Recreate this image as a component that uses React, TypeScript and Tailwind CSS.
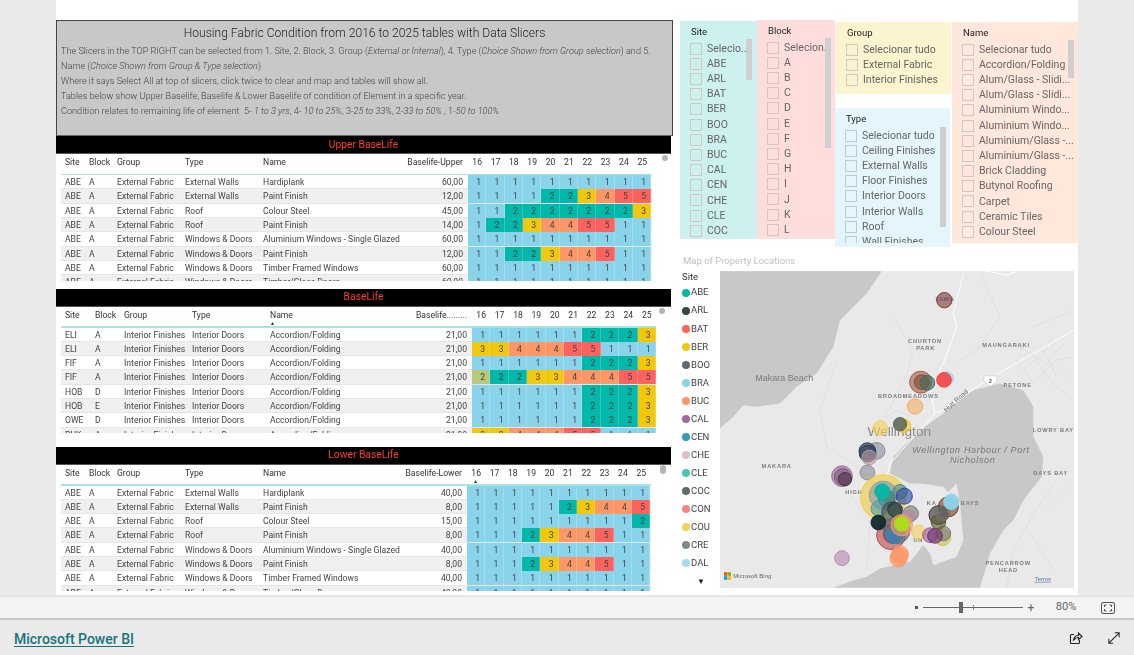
import React from "react";

const heat: Record<string, string> = {
  "1": "bg-[#8ad4eb]",
  "2": "bg-[#01b8aa]",
  "3": "bg-[#f2c80f]",
  "4": "bg-[#fe9666]",
  "5": "bg-[#fd625e]",
  p: "bg-[#b9c97a]",
};

type Row = [string, string, string, string, string, string, string];

const upper: Row[] = [
  ["ABE", "A", "External Fabric", "External Walls", "Hardiplank", "60,00", "1111111111"],
  ["ABE", "A", "External Fabric", "External Walls", "Paint Finish", "12,00", "1111223455"],
  ["ABE", "A", "External Fabric", "Roof", "Colour Steel", "45,00", "1122222223"],
  ["ABE", "A", "External Fabric", "Roof", "Paint Finish", "14,00", "1223445511"],
  ["ABE", "A", "External Fabric", "Windows & Doors", "Aluminium Windows - Single Glazed", "60,00", "1111111111"],
  ["ABE", "A", "External Fabric", "Windows & Doors", "Paint Finish", "12,00", "1122344511"],
  ["ABE", "A", "External Fabric", "Windows & Doors", "Timber Framed Windows", "60,00", "1111111111"],
  ["ABE", "A", "External Fabric", "Windows & Doors", "Timber/Glass Doors", "60,00", "1111111111"],
];
const base: Row[] = [
  ["ELI", "A", "Interior Finishes", "Interior Doors", "Accordion/Folding", "21,00", "1111112223"],
  ["ELI", "A", "Interior Finishes", "Interior Doors", "Accordion/Folding", "21,00", "3344455111"],
  ["FIF", "A", "Interior Finishes", "Interior Doors", "Accordion/Folding", "21,00", "1111112223"],
  ["FIF", "A", "Interior Finishes", "Interior Doors", "Accordion/Folding", "21,00", "p223344455"],
  ["HOB", "D", "Interior Finishes", "Interior Doors", "Accordion/Folding", "21,00", "1111112223"],
  ["HOB", "E", "Interior Finishes", "Interior Doors", "Accordion/Folding", "21,00", "1111112223"],
  ["OWE", "D", "Interior Finishes", "Interior Doors", "Accordion/Folding", "21,00", "1111112223"],
  ["PUK", "A", "Interior Finishes", "Interior Doors", "Accordion/Folding", "21,00", "3344455111"],
];
const lower: Row[] = [
  ["ABE", "A", "External Fabric", "External Walls", "Hardiplank", "40,00", "1111111111"],
  ["ABE", "A", "External Fabric", "External Walls", "Paint Finish", "8,00", "1111123445"],
  ["ABE", "A", "External Fabric", "Roof", "Colour Steel", "15,00", "1111111112"],
  ["ABE", "A", "External Fabric", "Roof", "Paint Finish", "8,00", "1112344511"],
  ["ABE", "A", "External Fabric", "Windows & Doors", "Aluminium Windows - Single Glazed", "40,00", "1111111111"],
  ["ABE", "A", "External Fabric", "Windows & Doors", "Paint Finish", "8,00", "1112344511"],
  ["ABE", "A", "External Fabric", "Windows & Doors", "Timber Framed Windows", "40,00", "1111111111"],
  ["ABE", "A", "External Fabric", "Windows & Doors", "Timber/Glass Doors", "40,00", "1111111111"],
];

const years = ["16", "17", "18", "19", "20", "21", "22", "23", "24", "25"];

function Table({
  title,
  rows,
  valueHead,
  grid,
  width,
  sort,
  thumb,
}: {
  title: string;
  rows: Row[];
  valueHead: string;
  grid: string;
  width: string;
  sort?: "name" | "year";
  thumb: string;
}) {
  return (
    <div className="relative">
      <div className="h-[18px] bg-black border-b border-[#555] flex items-center justify-center text-[#ff3b36] text-[10.3px] w-[615px]">
        {title}
      </div>
      <div className={`ml-[5px] overflow-hidden h-[126.5px] ${width}`}>
        <div className={`grid ${grid} h-[19.5px] items-start leading-[16px] text-[8.6px] text-[#333]`}>
          {["Site", "Block", "Group", "Type"].map((h) => (
            <div key={h} className="pl-[4px]">{h}</div>
          ))}
          <div className="pl-[4px] relative">
            Name
            {sort === "name" && <span className="absolute left-[4px] top-[8px] text-[5px] text-[#333]">▲</span>}
          </div>
          <div className="text-right pr-[5px] whitespace-nowrap -ml-[20px]">{valueHead}</div>
          {years.map((y, i) => (
            <div key={y} className="text-center relative">
              {y}
              {sort === "year" && i === 0 && <span className="absolute left-[6px] top-[8px] text-[5px] text-[#333]">▲</span>}
            </div>
          ))}
        </div>
        <div className="h-[1.5px] bg-[#a9e5e0]" />
        {rows.map((r, i) => (
          <div
            key={i}
            className={`grid ${grid} h-[14.33px] items-stretch text-[8.6px] leading-[14px] text-[#444] border-b border-[#e6e6e6] ${i % 2 ? "bg-[#f0f0f0]" : "bg-white"}`}
          >
            {r.slice(0, 5).map((c, j) => (
              <div key={j} className="pl-[4px] whitespace-nowrap overflow-hidden">{c}</div>
            ))}
            <div className="text-right pr-[5px]">{r[5]}</div>
            {r[6].split("").map((v, j) => (
              <div key={j} className={`${heat[v]} text-center pl-[4px] text-[#444] border-r border-white/20`}>
                {v === "p" ? "2" : v}
              </div>
            ))}
          </div>
        ))}
      </div>
      <div className={`absolute rounded-[3px] bg-[#b5b5b5] ${thumb}`} />
    </div>
  );
}

function Slicer({
  title,
  items,
  bg,
  className,
  thumb,
  listClass,
}: {
  title: string;
  items: string[];
  bg: string;
  className: string;
  thumb?: string;
  listClass?: string;
}) {
  return (
    <div className={`relative overflow-hidden ${bg} ${className}`}>
      <div className="pl-[11px] h-[13px] leading-[13px] text-[9.5px] text-[#222] mt-[4px]">{title}</div>
      <div className={`pl-[10px] mt-[3px] overflow-hidden ${listClass ?? ""}`}>
        {items.map((t) => (
          <div key={t} className="flex items-center h-[15.2px] gap-[5px] text-[10.5px] text-[#666] whitespace-nowrap">
            <span className={`w-[12px] h-[12px] shrink-0 border ${title === "Type" ? "border-[#b9cbd6]" : "border-[#cfc9c4]"}`} />
            <span>{t}</span>
          </div>
        ))}
      </div>
      {thumb && <div className={`absolute bg-[#cfcfcf] w-[6px] ${thumb}`} />}
    </div>
  );
}

const legend: [string, string][] = [
  ["ABE", "#01b8aa"], ["ARL", "#374649"], ["BAT", "#fd625e"], ["BER", "#f2c80f"],
  ["BOO", "#5f6b6d"], ["BRA", "#8ad4eb"], ["BUC", "#fe9666"], ["CAL", "#a66999"],
  ["CEN", "#3599b8"], ["CHE", "#dfbfbf"], ["CLE", "#4ac5bb"], ["COC", "#5f6b6d"],
  ["CON", "#fb8281"], ["COU", "#f4d25a"], ["CRE", "#7f898a"], ["DAL", "#a4ddee"],
];

type C = [number, number, number, string, number?];
const circles: C[] = [
  [793, 150, 23, "#7b3b3f"],
  [722, 396, 33, "#a0604a"], [725, 396, 22, "#8a4a30"], [742, 398, 22, "#3f6a5f"], [800, 385, 20, "#8ad4eb"], [792, 389, 22, "#fd3b3b", 0.85],
  [705, 469, 23, "#f3ae66"],
  [601, 534, 22, "#f2d45c"], [672, 527, 20, "#f2c80f"], [660, 522, 20, "#5f6b5f", 0.9],
  [590, 602, 25, "#8a8f98"], [562, 603, 25, "#2c3550"], [563, 610, 25, "#2c3c5c"], [568, 622, 22, "#b79aa0"],
  [562, 667, 22, "#8a9095"],
  [486, 678, 31, "#a06a9c"], [488, 680, 25, "#7a5a7c"], [495, 687, 20, "#4f3045"],
  [610, 742, 68, "#f2cc3a"], [610, 735, 42, "#8a9ab0"], [620, 745, 25, "#2a6a70"], [607, 724, 23, "#01b8aa", 0.95],
  [660, 725, 22, "#4a8a90"], [673, 738, 24, "#2a4aa8"],
  [597, 775, 24, "#4f9fac"], [635, 785, 30, "#445055"], [645, 778, 22, "#1c3a40"], [692, 790, 23, "#777777"], [685, 800, 20, "#b08a9c"],
  [633, 855, 43, "#b84a4a"], [640, 850, 30, "#903030"], [650, 840, 40, "#607080"], [595, 817, 22, "#10282c", 0.95],
  [642, 855, 25, "#2a8acc"], [665, 825, 32, "#fe9666"], [665, 821, 22, "#a9e014", 0.95],
  [716, 846, 21, "#f2d45c"], [788, 862, 24, "#c9c24a"], [790, 850, 22, "#777777"], [750, 855, 22, "#a05a9c"], [765, 857, 22, "#6a3070"],
  [805, 770, 30, "#7a3a20"], [775, 795, 28, "#333333"], [775, 815, 22, "#5a5a2a"], [787, 790, 22, "#707070"], [814, 755, 23, "#8ad4eb", 0.95],
  [660, 912, 25, "#fe9666"], [658, 918, 25, "#fe9666"], [655, 925, 25, "#fe9666"],
  [486, 924, 22, "#b58ab0"],
];

function MapChart() {
  const lab = "fill-[#7a7a7a]";
  return (
    <svg viewBox="120 63 1062 950" className="w-[354px] h-[317px] block" fontFamily="'Liberation Sans', sans-serif">
      <rect x="120" y="63" width="1062" height="950" fill="#e9e9e9" />
      <path d="M120 63H605L560 130 480 210 460 290 410 370 350 410 300 460 230 470 190 465 160 500 120 535Z" fill="#c8c8c8" />
      <path d="M880 420L960 400 1030 420 1060 470 1060 560 1090 620 1085 680 1030 750 1000 810 970 840 930 910 900 1013H460L520 990 560 980 600 955 690 935 730 885 750 910 760 945 830 920 850 870 830 830 815 740 790 710 720 700 690 700 630 670 640 620 720 540 790 490Z" fill="#c8c8c8" />
      <path d="M800 730L830 700 840 760 850 870 790 890 745 880 760 830 720 825 700 790 740 790Z" fill="#e9e9e9" />
      <g fill="none" stroke="#d4d4d4" strokeWidth="1.5">
        <path d="M470 330L420 480 440 590 520 640 590 700" />
        <path d="M640 200L700 300 680 380 620 490 560 560" />
        <path d="M900 70L960 200 890 300 830 340" />
        <path d="M1010 330L1060 400 1130 330 1182 320M1060 320L1120 400 1182 450" />
        <path d="M1000 280L1100 340 1150 280M1060 230L1182 180M1090 300L1130 380M1030 360L1100 300M1140 350L1182 390" />
        <path d="M620 500L650 480 700 500M600 560L560 590M500 720L570 820 560 960" />
        <path d="M1130 690L1060 790 1000 900 980 1013M1090 780L1182 700M1040 830L1120 960" />
      </g>
      <g fill="none" stroke="#fff" strokeWidth="3">
        <path d="M850 70L820 190 830 230 790 340 750 420 765 490 720 540 630 640 620 680" />
        <path d="M770 490L920 390 1182 240" />
        <path d="M920 63L980 75 1010 63" />
      </g>
      <g fontSize="17" fontWeight="700" letterSpacing="2.5" className={lab}>
        <text x="795" y="153" textAnchor="middle">TAWA</text>
        <text x="735" y="279" textAnchor="middle">CHURTON</text>
        <text x="737" y="301" textAnchor="middle">PARK</text>
        <text x="978" y="291" textAnchor="middle">MAUNGARAKI</text>
        <text x="1013" y="411" textAnchor="middle">PETONE</text>
        <text x="685" y="445" textAnchor="middle">BROADMEADOWS</text>
        <text x="1120" y="545" textAnchor="middle">LOWRY BAY</text>
        <text x="1112" y="674" textAnchor="middle">DAYS BAY</text>
        <text x="290" y="655" textAnchor="middle">MAKARA</text>
        <text x="522" y="732" textAnchor="middle">HIGH</text>
        <text x="755" y="766" textAnchor="middle">KA</text>
        <text x="870" y="766" textAnchor="middle">BAYS</text>
        <text x="985" y="946" textAnchor="middle">PENCARROW</text>
        <text x="985" y="967" textAnchor="middle">HEAD</text>
        <text x="715" y="876" textAnchor="middle">UN</text>
      </g>
      <text x="313" y="394" textAnchor="middle" fontSize="27" fill="#7a7a7a">Makara Beach</text>
      <text x="658" y="557" textAnchor="middle" fontSize="41" fill="#8a8a8a">Wellington</text>
      <g fontSize="27" fontStyle="italic" letterSpacing="2" fill="#777" textAnchor="middle">
        <text x="873" y="608">Wellington Harbour / Port</text>
        <text x="878" y="639">Nicholson</text>
      </g>
      <text x="828" y="458" fontSize="20" fill="#666" textAnchor="middle" transform="rotate(-42 828 452)">Hutt Road</text>
      <path d="M912 377H950V395L931 408 912 395Z" fill="#fff" stroke="#aaa" />
      <text x="931" y="398" fontSize="17" fontWeight="700" fill="#555" textAnchor="middle">2</text>
      {circles.map(([x, y, r, f, o], i) => (
        <circle key={i} cx={x} cy={y} r={r} fill={f} fillOpacity={o ?? 0.62} stroke={f} strokeWidth="3" />
      ))}
      <rect x="132" y="966" width="10" height="11" fill="#f25022" />
      <rect x="143" y="966" width="10" height="11" fill="#7fba00" />
      <rect x="132" y="978" width="10" height="11" fill="#00a4ef" />
      <rect x="143" y="978" width="10" height="11" fill="#ffb900" />
      <text x="160" y="985" fontSize="18" fill="#666">Microsoft Bing</text>
      <text x="1064" y="992" fontSize="18" fill="#5470b0" textDecoration="underline">Terms</text>
    </svg>
  );
}

export default function App() {
  return (
    <div
      className="w-[1134px] h-[655px] overflow-hidden bg-[#eaeaea] flex flex-col"
      style={{ fontFamily: "Roboto, 'Noto Sans', sans-serif" }}
    >
      <div className="ml-[56px] w-[1022px] h-[595px] bg-white flex shrink-0 overflow-hidden blur-[0.35px]">
        <div className="w-[624px] shrink-0 pt-[20px]">
          <div className="w-[617px] h-[116px] bg-[#c8c8c8] border border-[#444] border-b-[#666] px-[4px] text-[#444] text-[9.15px] leading-[15px] font-light">
            <div className="text-center text-[12.1px] font-light leading-[24px] text-[#222]">
              Housing Fabric Condition from 2016 to 2025 tables with Data Slicers
            </div>
            <div className="mt-[-1px] whitespace-nowrap">
              The Slicers in the TOP RIGHT can be selected from 1. Site, 2. Block, 3. Group (<i>External or Internal</i>), 4. Type (<i>Choice Shown from Group selection</i>) and 5.
            </div>
            <div>Name (<i>Choice Shown from Group &amp; Type selection</i>)</div>
            <div>Where it says Select All at top of slicers, click twice to clear and map and tables will show all.</div>
            <div>Tables below show Upper Baselife, Baselife &amp; Lower Baselife of condition of Element in a specific year.</div>
            <div>Condition relates to remaining life of element&nbsp; 5- <i>1 to 3 yrs</i>, 4- <i>10 to 25%</i>, 3-<i>25 to 33%</i>, 2-<i>33 to 50%</i> , 1-<i>50 to 100%</i></div>
          </div>
          <Table
            title="Upper BaseLife"
            rows={upper}
            valueHead="Baselife-Upper"
            grid="grid-cols-[24px_28px_68px_78px_150px_59px_repeat(10,18.35px)]"
            width="w-[591px]"
            thumb="left-[606px] top-[19px] w-[6px] h-[6px]"
          />
          <div className="h-[8px]" />
          <Table
            title="BaseLife"
            rows={base}
            valueHead="Baselife........."
            grid="grid-cols-[30px_29px_68px_78px_150px_56px_repeat(10,18.4px)]"
            width="w-[595px]"
            sort="name"
            thumb="left-[603px] top-[19px] w-[6px] h-[6px]"
          />
          <div className="h-[13.5px]" />
          <Table
            title="Lower BaseLife"
            rows={lower}
            valueHead="Baselife-Lower"
            grid="grid-cols-[24px_28px_68px_78px_150px_58px_repeat(10,18.35px)]"
            width="w-[590px]"
            sort="year"
            thumb="left-[604px] top-[18px] w-[6px] h-[9px]"
          />
        </div>
        <div className="flex-1 min-w-0">
          <div className="flex items-start h-[249px]">
            <Slicer
              title="Site"
              bg="bg-[#ccf1ee]"
              className="w-[77px] h-[218px] mt-[21px]"
              thumb="left-[66px] top-[18px] h-[41px]"
              items={["Selecio...", "ABE", "ARL", "BAT", "BER", "BOO", "BRA", "BUC", "CAL", "CEN", "CHE", "CLE", "COC"]}
            />
            <Slicer
              title="Block"
              bg="bg-[#fedddc]"
              className="w-[78px] h-[219px] mt-[20px]"
              thumb="left-[68px] top-[18px] h-[110px]"
              items={["Selecion...", "A", "B", "C", "D", "E", "F", "G", "H", "I", "J", "K", "L"]}
            />
            <div className="w-[117px] shrink-0 flex flex-col mt-[22px]">
              <Slicer
                title="Group"
                bg="bg-[#fcf4ce]"
                className="w-[115px] h-[72px] ml-[1px]"
                items={["Selecionar tudo", "External Fabric", "Interior Finishes"]}
              />
              <Slicer
                title="Type"
                bg="bg-[#e4f5fb]"
                className="w-[115px] h-[139px] mt-[14px]"
                thumb="left-[105px] top-[19px] h-[100px]"
                listClass="h-[115px]"
                items={["Selecionar tudo", "Ceiling Finishes", "External Walls", "Floor Finishes", "Interior Doors", "Interior Walls", "Roof", "Wall Finishes"]}
              />
            </div>
            <Slicer
              title="Name"
              bg="bg-[#ffe7dc]"
              className="w-[126px] h-[221px] mt-[22px]"
              thumb="left-[116px] top-[18px] h-[38px]"
              items={["Selecionar tudo", "Accordion/Folding", "Alum/Glass - Slidi...", "Alum/Glass - Slidi...", "Aluminium Windo...", "Aluminium Windo...", "Aluminium/Glass -...", "Aluminium/Glass -...", "Brick Cladding", "Butynol Roofing", "Carpet", "Ceramic Tiles", "Colour Steel"]}
            />
          </div>
          <div className="pl-[3px] h-[22px] leading-[23px] text-[9.5px] text-[#c0c0c0]">Map of Property Locations</div>
          <div className="flex">
            <div className="w-[40px] shrink-0 pl-[2px] mt-[-1.5px]">
              <div className="text-[9.5px] text-[#333] h-[14px] leading-[14px]">Site</div>
              {legend.map(([n, c]) => (
                <div key={n} className="flex items-center h-[18.07px] gap-[1px] text-[9.5px] text-[#444]">
                  <span className="w-[8px] h-[8px] rounded-full shrink-0" style={{ backgroundColor: c }} />
                  {n}
                </div>
              ))}
              <div className="text-[8px] leading-[10px] text-[#222] pl-[15px] mt-[4px]">▼</div>
            </div>
            <MapChart />
          </div>
        </div>
      </div>
      <div className="mt-[1px] h-[24px] bg-[#f3f3f3] border-t border-[#e4e4e4] border-b-2 border-b-[#c8c8c8] flex items-center justify-end text-[#666] shrink-0">
        <span className="w-[3px] h-[3px] bg-[#555] mr-[5px]" />
        <div className="relative w-[100px] h-[1px] bg-[#666]">
          <span className="absolute left-[36px] top-[-5px] w-[4px] h-[11px] bg-[#666]" />
          <span className="absolute left-[50px] top-[-2px] w-[1px] h-[5px] bg-[#888]" />
        </div>
        <span className="text-[12px] ml-[3px] w-[10px] text-center">+</span>
        <span className="text-[11px] w-[24px] ml-[18px] text-center">80%</span>
        <svg width="16" height="14" viewBox="0 0 16 14" className="ml-[22px] mr-[18px]" fill="none" stroke="#555">
          <rect x="1.5" y="1.5" width="13" height="11" rx="1.5" />
          <path d="M4.5 6V4H6.5M9.5 4H11.5V6M11.5 8V10H9.5M6.5 10H4.5V8" />
        </svg>
      </div>
      <div className="flex-1 flex items-center justify-between pl-[14px] pr-[14px]">
        <span className="text-[14px] font-medium text-[#16757a] underline underline-offset-2 mt-[3px]">Microsoft Power BI</span>
        <div className="flex items-center gap-[25px]">
          <svg width="14" height="14" viewBox="0 0 14 14" fill="none" stroke="#222" strokeWidth="1.1">
            <path d="M10.5 9V11.5Q10.5 12.5 9.5 12.5H2.5Q1.5 12.5 1.5 11.5V4.5Q1.5 3.5 2.5 3.5H5" />
            <path d="M4.5 9C5 6 7 4.5 9.5 4.5V2L13 5.5 9.5 8.5V6.5C7.5 6.5 6 7.5 4.5 9Z" />
          </svg>
          <svg width="12" height="12" viewBox="0 0 14 14" fill="none" stroke="#222" strokeWidth="1.2">
            <path d="M1 13L13 1M8 1H13V6M1 8V13H6" />
          </svg>
        </div>
      </div>
    </div>
  );
}
